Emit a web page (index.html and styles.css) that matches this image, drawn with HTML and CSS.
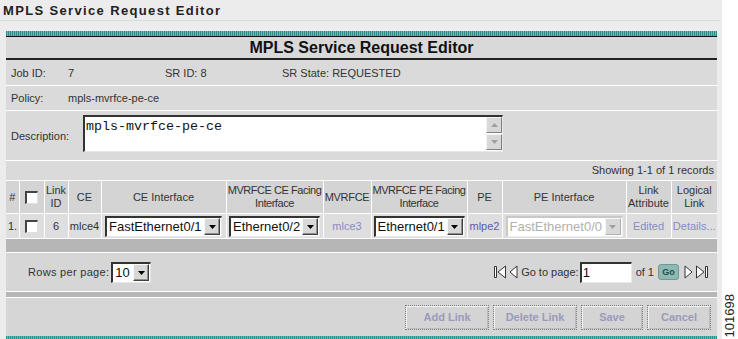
FILE: index.html
```html
<!DOCTYPE html>
<html>
<head>
<meta charset="utf-8">
<link rel="stylesheet" href="styles.css">
</head>
<body>
<div class="page">
  <div class="main">
    <div class="apptitle">MPLS Service Request Editor</div>
    <div class="panel">
      <div class="teal"></div>
      <div class="hdr">MPLS Service Request Editor</div>
      <div class="row info">
        <span class="lbl">Job ID:</span><span class="c2">7</span><span class="c3">SR ID: 8</span><span>SR State: REQUESTED</span>
      </div>
      <div class="row policy">
        <span class="lbl">Policy:</span><span>mpls-mvrfce-pe-ce</span>
      </div>
      <div class="row desc">
        <span class="lbl dlbl">Description:</span>
        <div class="textarea">
          <span class="ta-text">mpls-mvrfce-pe-ce</span>
          <div class="vscroll">
            <span class="sbtn"><svg width="7" height="4" viewBox="0 0 7 4"><path d="M0 4 L3.5 0 L7 4 Z" fill="#a0a0a0"/></svg></span>
            <span class="sbtn"><svg width="7" height="4" viewBox="0 0 7 4"><path d="M0 0 L3.5 4 L7 0 Z" fill="#a0a0a0"/></svg></span>
          </div>
        </div>
      </div>
      <div class="showing">Showing 1-1 of 1 records</div>
      <table class="grid">
        <colgroup>
          <col style="width:13px"><col style="width:25px"><col style="width:24px"><col style="width:33px"><col style="width:125px"><col style="width:97px"><col style="width:48px"><col style="width:96px"><col style="width:35px"><col style="width:124px"><col style="width:45px"><col style="width:46px">
        </colgroup>
        <thead>
          <tr class="hrow">
            <th>#</th>
            <th><span class="cb"></span></th>
            <th>Link<br>ID</th>
            <th>CE</th>
            <th>CE Interface</th>
            <th class="tight">MVRFCE CE Facing<br>Interface</th>
            <th class="tight1">MVRFCE</th>
            <th class="tight">MVRFCE PE Facing<br>Interface</th>
            <th>PE</th>
            <th>PE Interface</th>
            <th>Link<br>Attribute</th>
            <th>Logical<br>Link</th>
          </tr>
        </thead>
        <tbody>
          <tr class="drow">
            <td class="num">1.</td>
            <td><span class="cb"></span></td>
            <td>6</td>
            <td>mlce4</td>
            <td><span class="sel s-ce"><span class="sel-val">FastEthernet0/1</span><span class="sel-btn"><svg width="7" height="4" viewBox="0 0 7 4"><path d="M0 0 L3.5 4 L7 0 Z" fill="#000"/></svg></span></span></td>
            <td><span class="sel s-eth"><span class="sel-val">Ethernet0/2</span><span class="sel-btn"><svg width="7" height="4" viewBox="0 0 7 4"><path d="M0 0 L3.5 4 L7 0 Z" fill="#000"/></svg></span></span></td>
            <td><span class="lnk light">mlce3</span></td>
            <td><span class="sel s-eth"><span class="sel-val">Ethernet0/1</span><span class="sel-btn"><svg width="7" height="4" viewBox="0 0 7 4"><path d="M0 0 L3.5 4 L7 0 Z" fill="#000"/></svg></span></span></td>
            <td><span class="lnk dark">mlpe2</span></td>
            <td><span class="sel s-ce dis"><span class="sel-val">FastEthernet0/0</span><span class="sel-btn"><svg width="7" height="4" viewBox="0 0 7 4"><path d="M0 0 L3.5 4 L7 0 Z" fill="#a0a0a0"/></svg></span></span></td>
            <td><span class="lnk light">Edited</span></td>
            <td><span class="lnk light">Details...</span></td>
          </tr>
        </tbody>
      </table>
      <div class="darkbar"></div>
      <div class="pager">
        <div class="rpp">
          <span class="rpp-l">Rows per page:</span>
          <span class="sel s-rpp"><span class="sel-val">10</span><span class="sel-btn"><svg width="7" height="4" viewBox="0 0 7 4"><path d="M0 0 L3.5 4 L7 0 Z" fill="#000"/></svg></span></span>
        </div>
        <div class="nav">
          <svg class="ico" width="14" height="14" viewBox="0 0 14 14"><path d="M1.5 1.5 V12.5 H3.5 V1.5 Z" fill="#fff" stroke="#333"/><path d="M12.5 1 L5 7 L12.5 13 Z" fill="#fff" stroke="#333"/></svg>
          <svg class="ico" width="9" height="14" viewBox="0 0 9 14"><path d="M8 1 L1 7 L8 13 Z" fill="#fff" stroke="#333"/></svg>
          <span class="goto">Go to page:</span>
          <span class="pinput">1</span>
          <span class="of">of 1</span>
          <span class="gobtn">Go</span>
          <svg class="ico" width="9" height="14" viewBox="0 0 9 14"><path d="M1 1 L8 7 L1 13 Z" fill="#fff" stroke="#333"/></svg>
          <svg class="ico" width="14" height="14" viewBox="0 0 14 14"><path d="M1.5 1 L9 7 L1.5 13 Z" fill="#fff" stroke="#333"/><path d="M10.5 1.5 V12.5 H12.5 V1.5 Z" fill="#fff" stroke="#333"/></svg>
        </div>
      </div>
      <div class="darkbar thin"></div>
      <div class="buttons">
        <span class="btn b-add">Add Link</span>
        <span class="btn b-del">Delete Link</span>
        <span class="btn b-save">Save</span>
        <span class="btn b-cancel">Cancel</span>
      </div>
      <div class="teal"></div>
    </div>
  </div>
  <div class="side"><span class="fig">101698</span></div>
</div>
</body>
</html>
```

FILE: styles.css
```css
html, body {
  margin: 0;
  padding: 0;
}
body {
  font-family: "Liberation Sans", Arial, sans-serif;
  font-size: 11px;
  color: #333;
  background: #fff;
}
.page {
  display: flex;
  width: 738px;
  height: 339px;
  overflow: hidden;
}
.main {
  width: 722px;
  background: #ececec;
  flex: none;
}
.side {
  width: 16px;
  flex: none;
  background: #fff;
  display: flex;
  align-items: flex-end;
  justify-content: center;
}
.fig {
  writing-mode: vertical-rl;
  transform: rotate(180deg);
  font-size: 13px;
  color: #222;
  padding-top: 2px;
  line-height: 14px;
}
.apptitle {
  height: 21px;
  box-sizing: border-box;
  padding: 3px 0 0 3px;
  font-weight: bold;
  font-size: 13px;
  letter-spacing: 1.35px;
  color: #222;
  border-bottom: 1px solid #d2dede;
  margin-right: 2px;
}
.panel {
  width: 711px;
  margin: 10px 0 0 6px;
  background: #dadada;
}
.teal {
  height: 6px;
  background: repeating-linear-gradient(90deg, #2c918d 0 1px, #67b8b4 1px 2px);
}
.panel > .teal:first-child { height: 5px; }
.hdr {
  height: 21px;
  border-top: 1px solid #111;
  border-bottom: 2px solid #222;
  text-align: center;
  font-weight: bold;
  font-size: 16px;
  line-height: 21px;
  color: #111;
  background: #d9d9d9;
}
.row {
  display: flex;
  align-items: center;
  border-bottom: 1px solid #fff;
  padding-left: 5px;
  background: #dadada;
}
.info { height: 25px; }
.policy { height: 24px; }
.lbl { width: 57px; flex: none; }
.c2 { width: 97px; flex: none; }
.c3 { width: 117px; flex: none; }
.desc { height: 49px; }
.dlbl { width: 72px; }
.textarea {
  width: 420px;
  height: 37px;
  box-sizing: border-box;
  background: #fff;
  border-top: 2px solid #333;
  border-left: 2px solid #333;
  border-right: 1px solid #e8e8e8;
  border-bottom: 1px solid #e8e8e8;
  display: flex;
  justify-content: space-between;
  margin-top: -4px;
}
.ta-text {
  font-family: "Liberation Mono", "Courier New", monospace;
  font-size: 13.33px;
  color: #111;
  padding: 3px 0 0 1px;
  line-height: 14px;
}
.vscroll {
  width: 16px;
  display: flex;
  flex-direction: column;
  gap: 1px;
  background: #fff;
}
.sbtn {
  height: 16px;
  box-sizing: border-box;
  background: #d8d8d8;
  border-top: 1px solid #f4f4f4;
  border-left: 1px solid #f4f4f4;
  border-right: 1px solid #808080;
  border-bottom: 1px solid #808080;
  display: flex;
  align-items: center;
  justify-content: center;
}
.showing {
  height: 19px;
  line-height: 19px;
  text-align: right;
  padding-right: 3px;
  background: #dadada;
}
.grid {
  width: 711px;
  table-layout: fixed;
  border-collapse: collapse;
}
.grid th, .grid td {
  border: 1px solid #fff;
  padding: 0;
  text-align: center;
  font-weight: normal;
  color: #333;
  white-space: nowrap;
  overflow: hidden;
}
.grid tr > :first-child { border-left: none; }
.grid tr > :last-child { border-right: none; }
.hrow { height: 33px; }
.drow { height: 25px; }
.grid th {
  background: #d4d4d4;
  line-height: 13px;
}
.grid th.tight { letter-spacing: -0.45px; }
.grid th.tight1 { letter-spacing: -0.3px; }
.grid td {
  background: #dedede;
}
.grid td.num { text-align: left; padding-left: 2px; }
.cb {
  display: inline-block;
  width: 13px;
  height: 13px;
  box-sizing: border-box;
  background: #fff;
  border-top: 2px solid #444;
  border-left: 2px solid #444;
  border-right: 1px solid #e0e0e0;
  border-bottom: 1px solid #e0e0e0;
  vertical-align: middle;
}
.sel {
  display: inline-flex;
  align-items: center;
  justify-content: space-between;
  height: 21px;
  box-sizing: border-box;
  background: #fff;
  border-top: 2px solid #333;
  border-left: 2px solid #333;
  border-right: 1px solid #e8e8e8;
  border-bottom: 1px solid #e8e8e8;
  vertical-align: middle;
  text-align: left;
}
.sel-val {
  font-size: 13px;
  color: #111;
  padding-left: 2px;
  line-height: 17px;
}
.sel-btn {
  width: 16px;
  height: 17px;
  box-sizing: border-box;
  margin-right: 1px;
  background: #d8d8d8;
  border-top: 1px solid #f8f8f8;
  border-left: 1px solid #f8f8f8;
  border-right: 1px solid #404040;
  border-bottom: 1px solid #404040;
  box-shadow: inset -1px -1px 0 #909090;
  display: flex;
  align-items: center;
  justify-content: center;
}
.s-ce { width: 117px; }
.s-eth { width: 91px; }
.s-rpp { width: 40px; }
.sel.dis {
  border-color: #c8c8c8 #eee #eee #c8c8c8;
}
.sel.dis .sel-val { color: #b0b0b0; }
.sel.dis .sel-btn {
  border-right-color: #b0b0b0;
  border-bottom-color: #b0b0b0;
  box-shadow: none;
}
.lnk { color: #8a8ac4; }
.lnk.dark { color: #5a5aaa; }
.darkbar {
  height: 13px;
  background: #b6b6b6;
  border-bottom: 1px solid #fff;
}
.darkbar.thin {
  height: 5px;
  border-top: 1px solid #fff;
}
.pager {
  height: 38px;
  display: flex;
  align-items: center;
  justify-content: space-between;
  padding: 0 6px 0 22px;
  background: #d6d6d6;
}
.rpp {
  display: flex;
  align-items: center;
  gap: 2px;
}
.rpp-l { letter-spacing: 0.3px; }
.nav {
  display: flex;
  align-items: center;
}
.ico { display: block; margin-right: 2px; }
.goto { margin-left: 1px; }
.pinput {
  width: 52px;
  height: 21px;
  box-sizing: border-box;
  background: #fff;
  border-top: 2px solid #333;
  border-left: 2px solid #333;
  border-right: 1px solid #e8e8e8;
  border-bottom: 1px solid #e8e8e8;
  font-size: 13px;
  color: #111;
  line-height: 17px;
  padding-left: 1px;
  margin-left: 1px;
}
.of { margin: 0 4px 0 4px; }
.gobtn {
  width: 21px;
  height: 16px;
  box-sizing: border-box;
  border-radius: 3px;
  background: #8fb8b3;
  border: 1px solid #6e9a96;
  color: #1f4f4c;
  font-size: 9px;
  font-weight: bold;
  line-height: 14px;
  text-align: center;
  margin-right: 5px;
}
.buttons {
  height: 38px;
  display: flex;
  align-items: center;
  justify-content: flex-end;
  gap: 4px;
  padding-right: 6px;
  background: #d6d6d6;
}
.btn {
  height: 25px;
  box-sizing: border-box;
  border: 1px dotted #808080;
  box-shadow: inset 1px 1px 0 #f2f2f2, inset -1px -1px 0 #bbb;
  background: #d4d4d4;
  color: #9a9abc;
  font-weight: bold;
  font-size: 11px;
  line-height: 23px;
  text-align: center;
}
.b-add { width: 84px; }
.b-del { width: 84px; }
.b-save { width: 62px; }
.b-cancel { width: 64px; }
```
